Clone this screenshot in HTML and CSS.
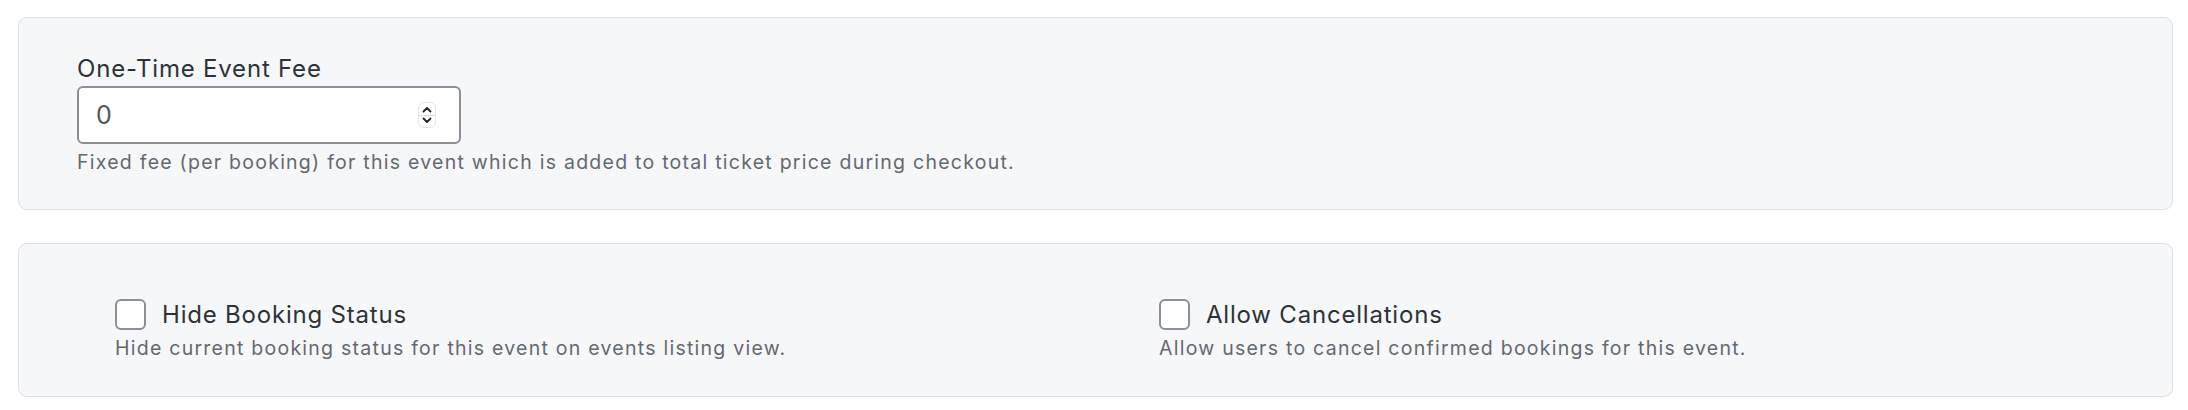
FILE: index.html
```html
<!DOCTYPE html>
<html lang="en">
<head>
    <meta charset="UTF-8">
    <meta name="viewport" content="width=device-width, initial-scale=1.0">
    <title>Event Booking Settings</title>
    <link rel="stylesheet" href="styles.css">
</head>
<body>
    <div class="settings-panel">
        <div class="fee-field">
            <label for="eventFee">One-Time Event Fee</label>
            <div class="number-input">
                <input type="text" id="eventFee" name="eventFee" value="0">
                <span class="spinner">
                    <svg width="10" height="7" viewBox="0 0 10 7"><path d="M1.5 5.5 L5 2 L8.5 5.5" fill="none" stroke="#1d2327" stroke-width="1.8" stroke-linecap="round" stroke-linejoin="round"/></svg>
                    <svg width="10" height="7" viewBox="0 0 10 7"><path d="M1.5 1.5 L5 5 L8.5 1.5" fill="none" stroke="#1d2327" stroke-width="1.8" stroke-linecap="round" stroke-linejoin="round"/></svg>
                </span>
            </div>
            <p class="description">Fixed fee (per booking) for this event which is added to total ticket price during checkout.</p>
        </div>
    </div>

    <div class="settings-panel options-panel">
        <div class="option">
            <label class="check-row" for="hideStatus">
                <input type="checkbox" id="hideStatus" name="hideStatus">
                <span>Hide Booking Status</span>
            </label>
            <p class="description">Hide current booking status for this event on events listing view.</p>
        </div>
        <div class="option">
            <label class="check-row" for="allowCancel">
                <input type="checkbox" id="allowCancel" name="allowCancel">
                <span>Allow Cancellations</span>
            </label>
            <p class="description">Allow users to cancel confirmed bookings for this event.</p>
        </div>
    </div>
</body>
</html>
```

FILE: styles.css
```css
* {
    box-sizing: border-box;
}
body {
    margin: 0;
    padding: 17px 15px 0 18px;
    font-family: Inter, "Noto Sans", sans-serif;
    background-color: #ffffff;
    color: #2c3338;
}
.settings-panel {
    background-color: #f6f7f9;
    border: 1.5px solid #dcdfe4;
    border-radius: 9px;
    margin-bottom: 33px;
}
.settings-panel:last-child {
    margin-bottom: 0;
}
.fee-field {
    padding: 35px 58px 34px;
}
.fee-field label {
    display: block;
    font-size: 24px;
    line-height: 31px;
    letter-spacing: 0.8px;
    margin-bottom: 2px;
}
.number-input {
    display: flex;
    align-items: center;
    width: 384px;
    height: 58px;
    background-color: #ffffff;
    border: 2px solid #8c8f94;
    border-radius: 6px;
    padding: 0 23px 0 17px;
}
.number-input input {
    flex: 1;
    min-width: 0;
    border: none;
    outline: none;
    background: transparent;
    font-family: inherit;
    font-size: 25px;
    color: #50575e;
    padding: 0;
}
.spinner {
    display: flex;
    flex-direction: column;
    align-items: center;
    justify-content: center;
    gap: 4px;
    width: 18px;
    height: 26px;
    border: 1px solid #e2e4e7;
    border-radius: 6px;
    background-color: #ffffff;
    position: relative;
}
.spinner::after {
    content: "";
    position: absolute;
    left: 0;
    right: 0;
    top: 12px;
    border-top: 1px solid #dcdcde;
}
.description {
    margin: 5px 0 0;
    font-size: 19.5px;
    line-height: 26px;
    letter-spacing: 1.25px;
    color: #646970;
}
.options-panel {
    display: grid;
    grid-template-columns: 1044px 1fr;
    padding: 55px 40px 35px 96px;
}
.check-row {
    display: flex;
    align-items: center;
    gap: 16px;
    font-size: 24px;
    line-height: 31px;
    letter-spacing: 0.8px;
}
.check-row input {
    appearance: none;
    margin: 0;
    width: 31px;
    height: 31px;
    border: 2px solid #8c8f94;
    border-radius: 6px;
    background-color: #ffffff;
}
.options-panel .description {
    margin-top: 5px;
}
```
